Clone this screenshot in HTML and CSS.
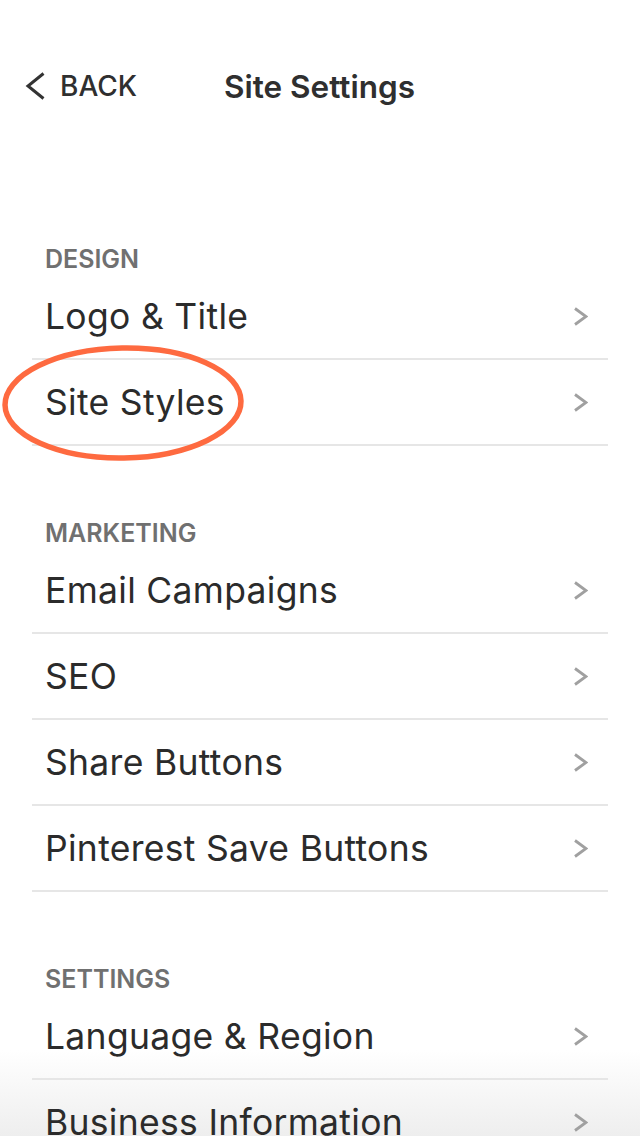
FILE: index.html
```html
<!DOCTYPE html>
<html>
<head>
<meta charset="utf-8">
<link rel="stylesheet" href="styles.css">
</head>
<body>
<div class="page">
  <header class="topbar">
    <a class="back">
      <svg class="back-icon" width="20" height="28" viewBox="0 0 20 28"><path d="M18.5 1.5 L3 14 L18.5 26.5" fill="none" stroke="#333" stroke-width="3"/></svg>
      <span>BACK</span>
    </a>
    <h1 class="title">Site Settings</h1>
  </header>

  <section class="group">
    <h2 class="label">DESIGN</h2>
    <ul class="list">
      <li class="item"><span>Logo &amp; Title</span><svg class="chev" width="15" height="19" viewBox="0 0 15 19"><path d="M2 1.5 L13 9.5 L2 17.5" fill="none" stroke="#a0a0a0" stroke-width="2.8"/></svg></li>
      <li class="item"><span>Site Styles</span><svg class="chev" width="15" height="19" viewBox="0 0 15 19"><path d="M2 1.5 L13 9.5 L2 17.5" fill="none" stroke="#a0a0a0" stroke-width="2.8"/></svg>
        <svg class="circle" width="250" height="124" viewBox="0 0 250 124"><ellipse cx="125" cy="62" rx="118" ry="55" fill="none" stroke="#fe6a40" stroke-width="5.5" transform="rotate(-1 125 62)"/></svg>
      </li>
    </ul>
  </section>

  <section class="group">
    <h2 class="label">MARKETING</h2>
    <ul class="list">
      <li class="item"><span>Email Campaigns</span><svg class="chev" width="15" height="19" viewBox="0 0 15 19"><path d="M2 1.5 L13 9.5 L2 17.5" fill="none" stroke="#a0a0a0" stroke-width="2.8"/></svg></li>
      <li class="item"><span>SEO</span><svg class="chev" width="15" height="19" viewBox="0 0 15 19"><path d="M2 1.5 L13 9.5 L2 17.5" fill="none" stroke="#a0a0a0" stroke-width="2.8"/></svg></li>
      <li class="item"><span>Share Buttons</span><svg class="chev" width="15" height="19" viewBox="0 0 15 19"><path d="M2 1.5 L13 9.5 L2 17.5" fill="none" stroke="#a0a0a0" stroke-width="2.8"/></svg></li>
      <li class="item"><span>Pinterest Save Buttons</span><svg class="chev" width="15" height="19" viewBox="0 0 15 19"><path d="M2 1.5 L13 9.5 L2 17.5" fill="none" stroke="#a0a0a0" stroke-width="2.8"/></svg></li>
    </ul>
  </section>

  <section class="group">
    <h2 class="label">SETTINGS</h2>
    <ul class="list">
      <li class="item"><span>Language &amp; Region</span><svg class="chev" width="15" height="19" viewBox="0 0 15 19"><path d="M2 1.5 L13 9.5 L2 17.5" fill="none" stroke="#a0a0a0" stroke-width="2.8"/></svg></li>
      <li class="item"><span>Business Information</span><svg class="chev" width="15" height="19" viewBox="0 0 15 19"><path d="M2 1.5 L13 9.5 L2 17.5" fill="none" stroke="#a0a0a0" stroke-width="2.8"/></svg></li>
    </ul>
  </section>
</div>
</body>
</html>
```

FILE: styles.css
```css
* { box-sizing: border-box; }
html, body { margin: 0; padding: 0; background: #fff; }
body { font-family: Inter, "Noto Sans", sans-serif; color: #2b2b2b; }
.page { width: 640px; height: 1136px; overflow: hidden; position: relative; background: linear-gradient(to bottom, #fff 0, #fff 1050px, #eeeeee 1136px); }
.topbar { display: flex; align-items: center; height: 172px; padding: 0 0 0 25px; }
.back { display: flex; align-items: center; gap: 15px; font-size: 28px; font-weight: 500; color: #2f2f2f; width: 199px; }
.back-icon { display: block; }
.title { margin: 0; font-size: 31.5px; font-weight: 600; color: #2f2f2f; }
.group { padding: 0 32px; margin-top: 72px; }
.label { margin: 0 0 0 13px; font-size: 25px; font-weight: 600; color: #707070; height: 30px; line-height: 30px; }
.list { list-style: none; margin: 0; padding: 0; }
.item { position: relative; display: flex; align-items: center; justify-content: space-between; height: 86px; padding: 0 20px 0 13px; border-bottom: 2px solid #e6e6e6; font-size: 35.5px; letter-spacing: 0.3px; color: #2b2b2b; }
.chev { display: block; }
.circle { position: absolute; left: -34px; top: -19px; pointer-events: none; }
```
